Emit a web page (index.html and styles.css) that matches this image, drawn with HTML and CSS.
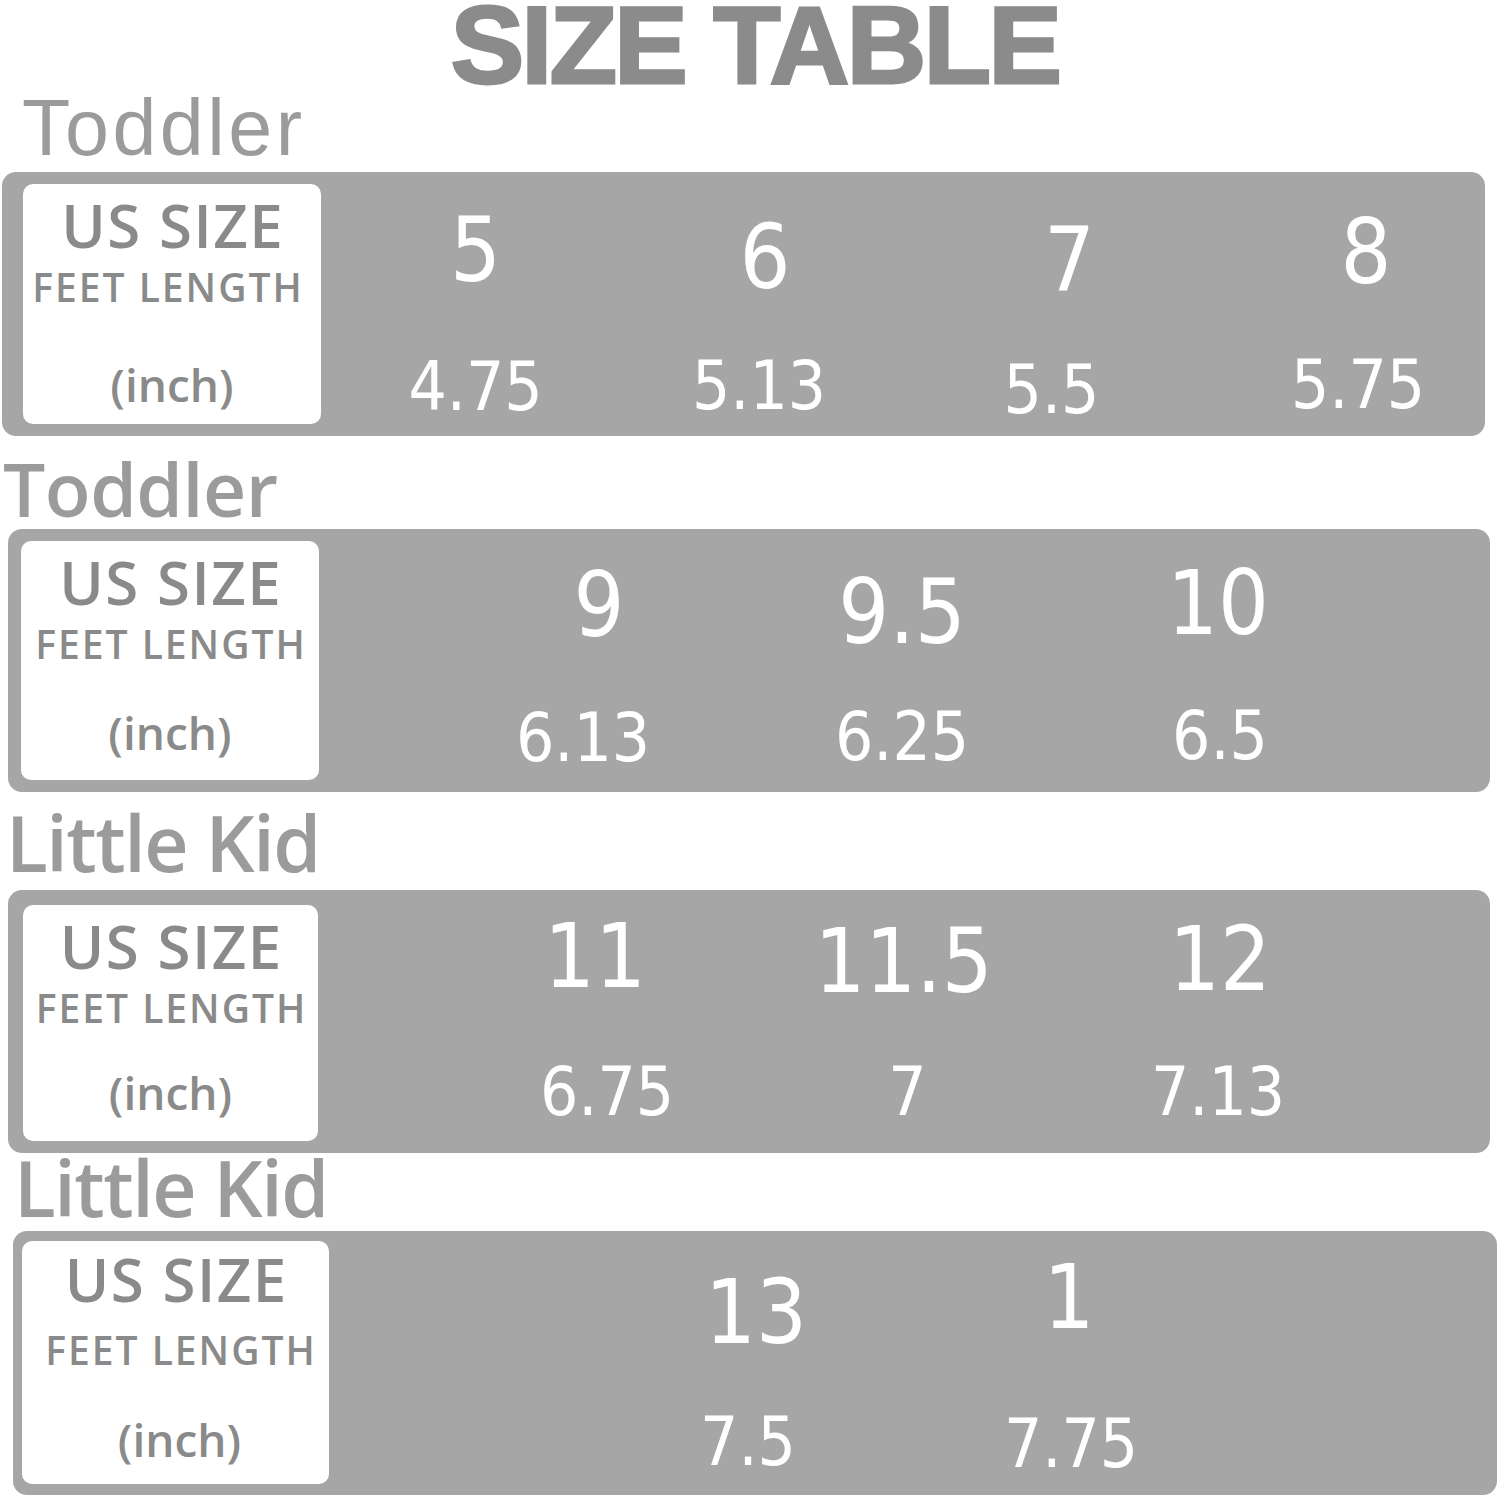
FILE: index.html
```html
<!DOCTYPE html>
<html lang="en">
<head>
<meta charset="utf-8">
<title>Size Table</title>
<link rel="stylesheet" href="styles.css">
</head>
<body>
<main class="sheet">
  <h1 class="title">SIZE TABLE</h1>

  <h2 class="group group--1">Toddler</h2>
  <section class="chart chart--1">
    <div class="legend legend--1">
      <span class="legend__size">US SIZE</span>
      <span class="legend__len">FEET LENGTH</span>
      <span class="legend__unit">(inch)</span>
    </div>
    <div class="values values--1">
      <div class="pair"><span class="size n-5">5</span><span class="len">4.75</span></div>
      <div class="pair"><span class="size n-6">6</span><span class="len n-513">5.13</span></div>
      <div class="pair"><span class="size n-7">7</span><span class="len n-55">5.5</span></div>
      <div class="pair"><span class="size n-8">8</span><span class="len n-575">5.75</span></div>
    </div>
  </section>

  <h2 class="group group--2">Toddler</h2>
  <section class="chart chart--2">
    <div class="legend legend--2">
      <span class="legend__size">US SIZE</span>
      <span class="legend__len">FEET LENGTH</span>
      <span class="legend__unit">(inch)</span>
    </div>
    <div class="values values--2">
      <div class="pair"><span class="size n-9">9</span><span class="len n-613">6.13</span></div>
      <div class="pair"><span class="size n-95">9.5</span><span class="len">6.25</span></div>
      <div class="pair"><span class="size n-10">10</span><span class="len n-65">6.5</span></div>
    </div>
  </section>

  <h2 class="group group--3">Little Kid</h2>
  <section class="chart chart--3">
    <div class="legend legend--3">
      <span class="legend__size">US SIZE</span>
      <span class="legend__len">FEET LENGTH</span>
      <span class="legend__unit">(inch)</span>
    </div>
    <div class="values values--3">
      <div class="pair"><span class="size n-11">11</span><span class="len n-675">6.75</span></div>
      <div class="pair"><span class="size n-115">11.5</span><span class="len n-7s">7</span></div>
      <div class="pair"><span class="size n-12">12</span><span class="len n-713">7.13</span></div>
    </div>
  </section>

  <h2 class="group group--4">Little Kid</h2>
  <section class="chart chart--4">
    <div class="legend legend--4">
      <span class="legend__size">US SIZE</span>
      <span class="legend__len">FEET LENGTH</span>
      <span class="legend__unit">(inch)</span>
    </div>
    <div class="values values--4">
      <div class="pair"><span class="size n-13">13</span><span class="len n-75">7.5</span></div>
      <div class="pair"><span class="size n-1">1</span><span class="len n-775">7.75</span></div>
    </div>
  </section>
</main>
</body>
</html>
```

FILE: styles.css
```css
* {
  box-sizing: border-box;
  margin: 0;
  padding: 0;
}

html,
body {
  background: #ffffff;
}

body {
  width: 1500px;
  height: 1497px;
  overflow: hidden;
  font-family: "Open Sans", "Noto Sans", sans-serif;
}

.sheet {
  display: flex;
  flex-direction: column;
  align-items: flex-start;
  padding-top: 4px;
}

/* ---------- title ---------- */
.title {
  align-self: stretch;
  height: 86px;
  padding-left: 10px;
  text-align: center;
  font-family: "Liberation Sans", Arial, sans-serif;
  font-weight: 700;
  font-size: 110px;
  line-height: 82px;
  letter-spacing: -2.5px;
  color: #8b8b8b;
  -webkit-text-stroke: 3px #8b8b8b;
}

/* ---------- group headings ---------- */
.group {
  font-family: "Open Sans", "Noto Sans", sans-serif;
  font-weight: 600;
  font-size: 77px;
  line-height: 80px;
  letter-spacing: -1.5px;
  color: #9b9b9b;
}

.group--1 {
  font-family: "Liberation Sans", Arial, sans-serif;
  font-weight: 400;
  font-size: 79px;
  line-height: 76px;
  letter-spacing: 3.5px;
  padding-left: 22px;
  margin-bottom: 6px;
}

.group--2 {
  font-size: 75px;
  letter-spacing: -0.5px;
  padding-left: 3px;
  margin-top: 12px;
  margin-bottom: 1px;
}

.group--3 {
  padding-left: 6px;
  margin-top: 11px;
  margin-bottom: 7px;
}

.group--4 {
  padding-left: 14px;
  margin-top: -5px;
  margin-bottom: 3px;
}

/* ---------- grey chart bar ---------- */
.chart {
  display: flex;
  background: #a7a6a7;
  border-radius: 14px;
}

.chart--1 { margin-left: 2px;  width: 1483px; height: 264px; padding: 12px 0 12px 21px; }
.chart--2 { margin-left: 8px;  width: 1482px; height: 263px; padding: 12px 0 12px 13px; }
.chart--3 { margin-left: 8px;  width: 1482px; height: 263px; padding: 15px 0 12px 15px; }
.chart--4 { margin-left: 13px; width: 1484px; height: 264px; padding: 10px 0 11px 9px; }

/* ---------- white legend card ---------- */
.legend {
  flex: none;
  display: flex;
  flex-direction: column;
  align-items: center;
  background: #ffffff;
  border-radius: 10px;
  color: #8a8a8a;
  font-weight: 600;
  white-space: nowrap;
}

.legend--1 { width: 298px; }
.legend--2 { width: 298px; }
.legend--3 { width: 295px; }
.legend--4 { width: 307px; }

.legend__size {
  font-size: 60px;
  line-height: 83px;
  letter-spacing: 1.5px;
  padding-left: 1.5px;
}

.legend__len {
  font-size: 39px;
  line-height: 40px;
  letter-spacing: 2px;
  padding-left: 2px;
}

.legend__unit {
  font-size: 46px;
  line-height: 50px;
  margin-top: 45px;
}

.legend--1 .legend__len { padding-right: 10px; }
.legend--1 .legend__unit { margin-top: 52px; }
.legend--2 .legend__unit { margin-top: 43px; }
.legend--3 .legend__unit { margin-top: 39px; }

.legend--4 .legend__size { line-height: 77px; }
.legend--4 .legend__len { line-height: 63px; padding-left: 11px; }
.legend--4 .legend__unit { margin-top: 33px; padding-left: 8px; }

/* ---------- numbers ---------- */
.values {
  display: grid;
  grid-auto-flow: column;
  align-content: start;
  color: #ffffff;
  font-family: "DejaVu Sans Condensed", "DejaVu Sans", sans-serif;
  font-stretch: condensed;
  font-weight: 400;
}

.pair {
  display: flex;
  flex-direction: column;
  align-items: center;
}

.size {
  font-size: 89px;
  line-height: 90px;
}

.len {
  font-size: 67px;
  line-height: 68px;
}

.values--1 { padding: 26px 0 0 15px;  grid-template-columns: 279px 294px 303px 300px; }
.values--2 { padding: 21px 0 0 118px; grid-template-columns: 308px 314px 320px; }
.values--3 { padding: 9px 0 0 133px;  grid-template-columns: 300px 309px 318px; }
.values--4 { padding: 19px 0 0 264px; grid-template-columns: 318px 318px; }

.values--1 .pair { gap: 53px; }
.values--2 .pair { gap: 51px; }
.values--3 .pair { gap: 54px; }
.values--4 .pair { gap: 59px; }

/* small hand-placed offsets from the artwork */
.n-5   { translate: 0 -5px; }
.n-6   { translate: 3px 2px; }
.n-513 { translate: -3px -1px; }
.n-7   { translate: 9px 5px; }
.n-55  { translate: -9px 3px; }
.n-8   { translate: 4px -3px; }
.n-575 { translate: -4px -2px; }

.n-9   { translate: 8px -2px; }
.n-613 { translate: -8px 1px; }
.n-95  { translate: 0 5px; }
.n-10  { translate: -1px -4px; }
.n-65  { translate: 1px -1px; }

.n-11  { translate: -6px -3px; }
.n-675 { translate: 6px 0; }
.n-115 { translate: -2px 2px; }
.n-7s  { translate: 2px 0; }
.n-12  { translate: 1px 0; }
.n-713 { translate: -1px 0; }

.n-13  { translate: 4px 7px; }
.n-75  { translate: -4px -1px; }
.n-1   { translate: -1px -8px; }
.n-775 { translate: 1px 1px; }
```
